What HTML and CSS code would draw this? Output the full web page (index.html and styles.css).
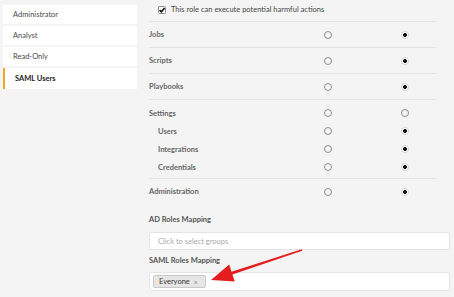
FILE: index.html
```html
<!DOCTYPE html>
<html>
<head>
<meta charset="utf-8">
<link rel="stylesheet" href="styles.css">
</head>
<body>
<div class="page">
  <ul class="roles">
    <li class="role">Administrator</li>
    <li class="role">Analyst</li>
    <li class="role">Read-Only</li>
    <li class="role active">SAML Users</li>
  </ul>
  <div class="main">
    <div class="perms">
      <div class="harm">
        <svg class="cbox" width="8" height="8" viewBox="0 0 8 8"><rect x="0.5" y="0.5" width="7" height="7" rx="1" fill="#fff" stroke="#8a8a8a"/><path d="M1.6 4.1 L3.3 5.8 L6.6 1.9" fill="none" stroke="#111" stroke-width="1.6"/></svg>
        <span>This role can execute potential harmful actions</span>
      </div>
      <div class="row"><span class="lbl">Jobs</span><span class="radio"></span><span class="radio on"></span></div>
      <div class="row"><span class="lbl">Scripts</span><span class="radio"></span><span class="radio on"></span></div>
      <div class="row"><span class="lbl">Playbooks</span><span class="radio"></span><span class="radio on"></span></div>
      <div class="group">
        <div class="line"><span class="lbl">Settings</span><span class="radio"></span><span class="radio"></span></div>
        <div class="line sub"><span class="lbl">Users</span><span class="radio"></span><span class="radio on"></span></div>
        <div class="line sub"><span class="lbl">Integrations</span><span class="radio"></span><span class="radio on"></span></div>
        <div class="line sub"><span class="lbl">Credentials</span><span class="radio"></span><span class="radio on"></span></div>
      </div>
      <div class="row last"><span class="lbl">Administration</span><span class="radio"></span><span class="radio on"></span></div>
    </div>
    <div class="mapping">
      <div class="mlabel">AD Roles Mapping</div>
      <div class="field ad"><span class="ph">Click to select groups</span></div>
      <div class="mlabel">SAML Roles Mapping</div>
      <div class="field saml"><span class="tag">Everyone <span class="x">×</span></span></div>
    </div>
  </div>
</div>
<svg class="arrow" width="454" height="297" viewBox="0 0 454 297">
  <polygon fill="#e41e1e" points="302.3,250.8 232.4,274.6 234.8,281.4 211,280 229.2,264.6 231.5,271.8 301.7,249.2"/>
</svg>
</body>
</html>
```
FILE: styles.css
```css
html, body {
  margin: 0;
  padding: 0;
  background: #f4f4f4;
  font-family: Lato, "Open Sans", sans-serif;
  font-size: 7.5px;
  color: #555;
}
.page {
  display: flex;
  align-items: flex-start;
  width: 454px;
  height: 297px;
  overflow: hidden;
}
.roles {
  list-style: none;
  margin: 5px 0 0 3px;
  padding: 0;
  width: 134px;
  display: flex;
  flex-direction: column;
  gap: 2px;
}
.role {
  background: #fff;
  height: 19px;
  line-height: 19px;
  padding-left: 10px;
  color: #4a4a4a;
}
.role.active {
  height: 21px;
  line-height: 21px;
  border-left: 2px solid #f5a623;
  padding-left: 10px;
  color: #222;
  font-weight: 700;
}
.main {
  margin-left: 12px;
  width: 301px;
}
.perms {
  width: 287px;
}
.harm {
  height: 22px;
  border-bottom: 1px solid #e3e3e3;
  display: flex;
  align-items: center;
  padding-left: 9px;
  box-sizing: border-box;
  padding-bottom: 2px;
  gap: 5px;
  color: #444;
}
.cbox { display: block; }
.row, .line {
  display: grid;
  grid-template-columns: 175px 8px 69px 8px;
  align-items: center;
}
.row {
  height: 25px;
  border-bottom: 1px solid #e3e3e3;
}
.row.last { border-bottom: none; }
.group {
  padding: 4px 0 2px;
  border-bottom: 1px solid #e3e3e3;
}
.line { height: 18px; }
.line.sub .lbl { padding-left: 9px; }
.lbl {
  color: #666;
  font-weight: 700;
}
.radio {
  width: 8px;
  height: 8px;
  box-sizing: border-box;
  border-radius: 50%;
  border: 1px solid #8c8c8c;
  background: transparent;
  display: block;
}
.radio:nth-child(2) { grid-column: 2; }
.radio:nth-child(3) { grid-column: 4; }
.radio.on {
  border: 1px solid #d4d4d4;
  background: radial-gradient(circle, #111 0 1.7px, #fff 2.2px);
}
.mapping {
  padding-top: 10px;
}
.mlabel {
  height: 12px;
  line-height: 12px;
  color: #555;
  font-weight: 700;
}
.field {
  background: #fff;
  border: 1px solid #e4e4e4;
  border-radius: 2px;
  box-sizing: border-box;
  display: flex;
  align-items: center;
}
.field.ad {
  margin-top: 6px;
  margin-bottom: 5px;
  height: 18px;
  padding-left: 8px;
}
.ph { color: #aaa; }
.field.saml {
  margin-top: 5px;
  height: 19px;
  padding-left: 3px;
}
.tag {
  height: 13px;
  box-sizing: border-box;
  border: 1px solid #c9c9c9;
  background: #e6e6e6;
  border-radius: 2px;
  padding: 0 7px 0 5px;
  display: flex;
  align-items: center;
  gap: 4px;
  color: #333;
}
.x { color: #888; font-size: 7px; }
.arrow {
  position: absolute;
  left: 0;
  top: 0;
  pointer-events: none;
}
```
